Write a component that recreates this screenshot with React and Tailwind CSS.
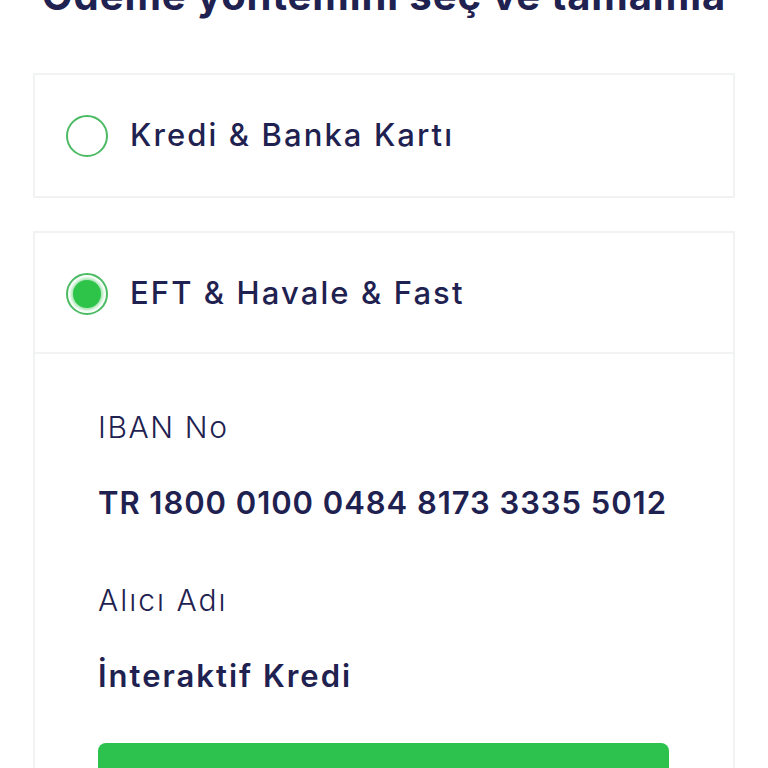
import React, { useState } from "react";

const font = { fontFamily: "Inter, 'Noto Sans', sans-serif" };

const Radio = ({ checked }) => (
  <span className="relative flex h-[42px] w-[42px] shrink-0 items-center justify-center rounded-full border-2 border-[#4cbb64] bg-white">
    {checked && (
      <span className="h-[28px] w-[28px] rounded-full bg-[#2ec44a] shadow-[0_0_3px_2px_rgba(46,196,74,0.45)]"></span>
    )}
  </span>
);

const App = () => {
  const [method, setMethod] = useState("eft");

  return (
    <div className="h-[768px] w-[768px] overflow-hidden bg-white text-[#1f2250]" style={font}>
      {/* Title, cut by the top edge */}
      <h1 className="-mt-[28px] text-center text-[40px] font-bold leading-[48px] tracking-[0.9px]">
        Ödeme yöntemini seç ve tamamla
      </h1>

      <div className="mx-[33px] mt-[53px] flex flex-col gap-[33px]">
        {/* Card payment */}
        <div className="border-2 border-[#f1f3f3] bg-white">
          <button
            onClick={() => setMethod("card")}
            className="flex h-[121px] w-full items-center gap-[22px] px-[31px] text-left"
          >
            <Radio checked={method === "card"} />
            <span className="text-[31px] font-medium tracking-[2.1px]">Kredi &amp; Banka Kartı</span>
          </button>
        </div>

        {/* EFT / Havale */}
        <div className="border-2 border-[#f1f3f3] bg-white">
          <button
            onClick={() => setMethod("eft")}
            className="flex h-[121px] w-full items-center gap-[22px] border-b-2 border-[#f1f3f3] px-[31px] pt-[2px] text-left"
          >
            <Radio checked={method === "eft"} />
            <span className="text-[31px] font-medium tracking-[2.1px]">EFT &amp; Havale &amp; Fast</span>
          </button>

          <div className="flex flex-col px-[63px] pt-[51px]">
            <p className="text-[30px] font-light leading-[45px] tracking-[1.6px]">IBAN No</p>
            <p className="mt-[30px] text-[31px] font-semibold leading-[45px] tracking-[0.95px]">
              TR 1800 0100 0484 8173 3335 5012
            </p>
            <p className="mt-[53px] text-[30px] font-light leading-[45px] tracking-[2px]">Alıcı Adı</p>
            <p className="mt-[30px] text-[31px] font-semibold leading-[45px] tracking-[2px]">İnteraktif Kredi</p>
            <button className="mt-[45px] flex h-[90px] w-[571px] items-center justify-center rounded-[8px] bg-[#2dc24d] text-[28px] font-semibold text-white">
              Ödemeyi Tamamla
            </button>
          </div>
        </div>
      </div>
    </div>
  );
};

export default App;
